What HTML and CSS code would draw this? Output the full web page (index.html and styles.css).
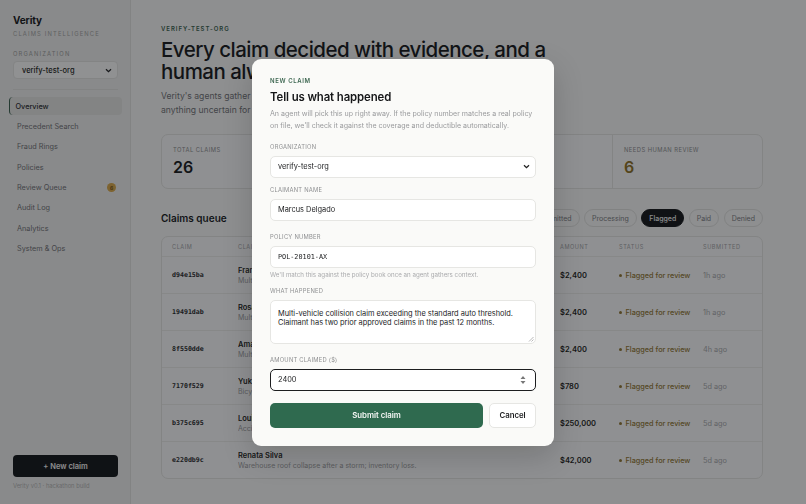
FILE: index.html
```html
<!DOCTYPE html>
<html lang="en">
<head>
<meta charset="utf-8">
<title>Verity</title>
<link rel="stylesheet" href="styles.css">
</head>
<body>
<div class="app">
  <aside class="sidebar">
    <div class="brand">Verity</div>
    <div class="brand-sub">CLAIMS INTELLIGENCE</div>
    <div class="side-label">ORGANIZATION</div>
    <div class="side-select">
      <span>verify-test-org</span>
      <svg width="7" height="5" viewBox="0 0 7 5"><path d="M1 1.2 3.5 3.7 6 1.2" fill="none" stroke="#222" stroke-width="1.3"/></svg>
    </div>
    <div class="side-divider"></div>
    <nav class="nav">
      <a class="nav-item active">Overview</a>
      <a class="nav-item">Precedent Search</a>
      <a class="nav-item">Fraud Rings</a>
      <a class="nav-item">Policies</a>
      <a class="nav-item">Review Queue <span class="badge">6</span></a>
      <a class="nav-item">Audit Log</a>
      <a class="nav-item">Analytics</a>
      <a class="nav-item">System &amp; Ops</a>
    </nav>
    <div class="side-bottom">
      <button class="new-claim">+ New claim</button>
      <div class="version">Verity v0.1 · hackathon build</div>
    </div>
  </aside>

  <main class="main">
    <div class="eyebrow">VERIFY-TEST-ORG</div>
    <h1 class="headline">Every claim decided with evidence, and a human always in the loop.</h1>
    <p class="lead">Verity's agents gather policy terms, precedent and fraud signals, then route anything uncertain for a human decision before any money moves.</p>

    <section class="stats">
      <div class="stat">
        <div class="stat-label">TOTAL CLAIMS</div>
        <div class="stat-value">26</div>
      </div>
      <div class="stat">
        <div class="stat-label">AUTO-APPROVED</div>
        <div class="stat-value">14</div>
      </div>
      <div class="stat">
        <div class="stat-label">IN PROGRESS</div>
        <div class="stat-value">6</div>
      </div>
      <div class="stat">
        <div class="stat-label">NEEDS HUMAN REVIEW</div>
        <div class="stat-value amber">6</div>
      </div>
    </section>

    <div class="queue-head">
      <h2 class="queue-title">Claims queue</h2>
      <div class="pills">
        <span class="pill">All</span>
        <span class="pill">Submitted</span>
        <span class="pill">Processing</span>
        <span class="pill on">Flagged</span>
        <span class="pill">Paid</span>
        <span class="pill">Denied</span>
      </div>
    </div>

    <section class="table">
      <div class="row head">
        <span>CLAIM</span><span>CLAIMANT</span><span>AMOUNT</span><span>STATUS</span><span>SUBMITTED</span>
      </div>
      <div class="row">
        <span class="id">d94e15ba</span>
        <span class="who"><b>Frank Okafor</b><i>Multi-vehicle collision claim exceeding the standard auto threshold.</i></span>
        <span class="amt">$2,400</span>
        <span class="status"><em></em>Flagged for review</span>
        <span class="ago">1h ago</span>
      </div>
      <div class="row">
        <span class="id">19491dab</span>
        <span class="who"><b>Rosa Martinez</b><i>Multi-vehicle collision claim exceeding the standard auto threshold.</i></span>
        <span class="amt">$2,400</span>
        <span class="status"><em></em>Flagged for review</span>
        <span class="ago">1h ago</span>
      </div>
      <div class="row">
        <span class="id">8f550dde</span>
        <span class="who"><b>Amara Chen</b><i>Multi-vehicle collision claim exceeding the standard auto threshold.</i></span>
        <span class="amt">$2,400</span>
        <span class="status"><em></em>Flagged for review</span>
        <span class="ago">4h ago</span>
      </div>
      <div class="row">
        <span class="id">7170f529</span>
        <span class="who"><b>Yuki Tanaka</b><i>Bicycle stolen from a locked garage.</i></span>
        <span class="amt">$780</span>
        <span class="status"><em></em>Flagged for review</span>
        <span class="ago">5d ago</span>
      </div>
      <div class="row">
        <span class="id">b375c695</span>
        <span class="who"><b>Louis Bernard</b><i>Accidental fire damage to a commercial kitchen.</i></span>
        <span class="amt">$250,000</span>
        <span class="status"><em></em>Flagged for review</span>
        <span class="ago">5d ago</span>
      </div>
      <div class="row">
        <span class="id">e220db9c</span>
        <span class="who"><b>Renata Silva</b><i>Warehouse roof collapse after a storm; inventory loss.</i></span>
        <span class="amt">$42,000</span>
        <span class="status"><em></em>Flagged for review</span>
        <span class="ago">5d ago</span>
      </div>
    </section>
  </main>
</div>

<div class="overlay">
  <div class="modal">
    <div class="m-eyebrow">NEW CLAIM</div>
    <h3 class="m-title">Tell us what happened</h3>
    <p class="m-desc">An agent will pick this up right away. If the policy number matches a real policy on file, we'll check it against the coverage and deductible automatically.</p>

    <div class="field f-org">
      <div class="f-label">ORGANIZATION</div>
      <div class="f-box select">
        <span>verify-test-org</span>
        <svg width="7" height="5" viewBox="0 0 7 5"><path d="M1 1.2 3.5 3.7 6 1.2" fill="none" stroke="#222" stroke-width="1.3"/></svg>
      </div>
    </div>
    <div class="field f-name">
      <div class="f-label">CLAIMANT NAME</div>
      <div class="f-box"><span>Marcus Delgado</span></div>
    </div>
    <div class="field">
      <div class="f-label">POLICY NUMBER</div>
      <div class="f-box mono"><span>POL-20101-AX</span></div>
      <div class="f-hint">We'll match this against the policy book once an agent gathers context.</div>
    </div>
    <div class="field f-what">
      <div class="f-label">WHAT HAPPENED</div>
      <div class="f-box area">Multi-vehicle collision claim exceeding the standard auto threshold. Claimant has two prior approved claims in the past 12 months.
        <svg class="grip" width="6" height="6" viewBox="0 0 6 6"><path d="M5.5 1 1 5.5M5.5 3.5 3.5 5.5" stroke="#9a9a9a" stroke-width=".7"/></svg>
      </div>
    </div>
    <div class="field">
      <div class="f-label">AMOUNT CLAIMED ($)</div>
      <div class="f-box focus">
        <span>2400</span>
        <svg width="6" height="10" viewBox="0 0 6 10"><path d="M3 1 5.5 4H.5z M3 9 .5 6h5z" fill="#777"/></svg>
      </div>
    </div>
    <div class="actions">
      <button class="btn-submit">Submit claim</button>
      <button class="btn-cancel">Cancel</button>
    </div>
  </div>
</div>
</body>
</html>
```

FILE: styles.css
```css
* { box-sizing: border-box; margin: 0; padding: 0; }

html, body { height: 100%; }

body {
  font-family: Inter, "Noto Sans", "Liberation Sans", sans-serif;
  background: #f8f8f6;
  color: #1b1c1e;
  overflow: hidden;
}

.app {
  display: flex;
  height: 504px;
}

/* Sidebar */
.sidebar {
  width: 131px;
  flex: none;
  background: #efefed;
  border-right: 1px solid #e2e2df;
  padding: 14px 12px 14px 13px;
  display: flex;
  flex-direction: column;
}

.brand {
  font-size: 10px;
  line-height: 13px;
  font-weight: 700;
  letter-spacing: -0.01em;
  color: #161719;
}

.brand-sub {
  margin-top: 2.5px;
  font-size: 5.8px;
  line-height: 7px;
  letter-spacing: 0.2em;
  color: #a4a4a2;
}

.side-label {
  margin-top: 13px;
  font-size: 5.8px;
  line-height: 7px;
  letter-spacing: 0.2em;
  color: #9c9c9a;
}

.side-select {
  margin-top: 4.5px;
  height: 18px;
  background: #fbfbfa;
  border: 1px solid #e3e3e0;
  border-radius: 4px;
  display: flex;
  align-items: center;
  justify-content: space-between;
  padding: 0 5px 0 8px;
  font-size: 7.5px;
  font-weight: 500;
  color: #1d1e20;
}

.side-divider {
  height: 1px;
  background: #e2e2df;
  margin: 10px 0 7px;
}

.nav {
  display: flex;
  flex-direction: column;
  gap: 2.4px;
  margin: 0 -4px;
}

.nav-item {
  height: 18px;
  display: flex;
  align-items: center;
  justify-content: space-between;
  padding: 0 6px 0 7px;
  border-radius: 4px;
  font-size: 7.3px;
  color: #6f7073;
  border-left: 1.5px solid transparent;
}

.nav-item.active {
  background: #e3e3e0;
  color: #2a2b2d;
  font-weight: 500;
  border-left-color: #3a5e4c;
  padding-left: 5.5px;
}

.badge {
  width: 9px;
  height: 9px;
  border-radius: 50%;
  background: #d9a847;
  color: #7a5412;
  font-size: 5px;
  font-weight: 700;
  display: flex;
  align-items: center;
  justify-content: center;
}

.side-bottom {
  margin-top: auto;
}

.new-claim {
  width: 100%;
  height: 22px;
  border: none;
  border-radius: 4px;
  background: #121417;
  color: #f3f3f1;
  font-family: inherit;
  font-size: 7.5px;
  font-weight: 600;
}

.version {
  margin-top: 5px;
  font-size: 5.8px;
  line-height: 8px;
  color: #b4b4b2;
}

/* Main */
.main {
  flex: 1;
  padding: 25px 43px 0 30px;
  min-width: 0;
}

.eyebrow {
  font-size: 6px;
  line-height: 8px;
  letter-spacing: 0.16em;
  font-weight: 600;
  color: #38604c;
}

.headline {
  margin-top: 6px;
  max-width: 385px;
  font-size: 20.5px;
  line-height: 22px;
  font-weight: 500;
  letter-spacing: -0.025em;
  color: #17181a;
}

.lead {
  margin-top: 6px;
  max-width: 340px;
  font-size: 8.6px;
  line-height: 14px;
  color: #707174;
}

.stats {
  margin-top: 17px;
  height: 55px;
  display: grid;
  grid-template-columns: repeat(4, 1fr);
  border: 1px solid #e3e3e0;
  border-radius: 7px;
  background: #fafaf9;
}

.stat {
  padding: 11px 11px 0;
  border-left: 1px solid #e3e3e0;
}

.stat:first-child { border-left: none; }

.stat-label {
  font-size: 5.8px;
  line-height: 8px;
  letter-spacing: 0.08em;
  color: #8c8d8f;
}

.stat-value {
  margin-top: 4px;
  font-size: 16px;
  line-height: 19px;
  font-weight: 600;
  color: #17181a;
}

.stat-value.amber { color: #8c6f22; }

.queue-head {
  margin-top: 20px;
  display: flex;
  align-items: center;
  justify-content: space-between;
}

.queue-title {
  font-size: 10px;
  font-weight: 600;
  color: #17181a;
}

.pills {
  display: flex;
  gap: 4.5px;
}

.pill {
  height: 18px;
  padding: 0 7px;
  border: 1px solid #e0e0dd;
  border-radius: 9px;
  font-size: 7px;
  color: #7a7b7e;
  display: flex;
  align-items: center;
  background: #f8f8f6;
}

.pill.on {
  background: #131517;
  border-color: #131517;
  color: #f2f2f0;
  font-weight: 500;
}

.table {
  margin-top: 9px;
  border: 1px solid #e3e3e0;
  border-radius: 7px;
  background: #fafaf9;
}

.row {
  display: grid;
  grid-template-columns: 66px 322px 59px 84px 1fr;
  align-items: center;
  padding: 0 10px;
  height: 37px;
  border-top: 1px solid #ebebe8;
  font-size: 7.3px;
}

.row.head {
  height: 19px;
  border-top: none;
  font-size: 5.6px;
  letter-spacing: 0.1em;
  color: #a2a3a5;
}

.id {
  font-family: "DejaVu Sans Mono", "Liberation Mono", monospace;
  font-weight: 700;
  font-size: 6.6px;
  color: #27282a;
}

.who {
  display: flex;
  flex-direction: column;
  gap: 1px;
  overflow: hidden;
  white-space: nowrap;
}

.who b {
  font-weight: 600;
  color: #1d1e20;
  font-size: 7.5px;
  line-height: 9px;
}

.who i {
  font-style: normal;
  color: #9a9b9d;
  font-size: 7px;
  line-height: 9px;
}

.amt {
  font-weight: 600;
  color: #1d1e20;
  font-size: 7.5px;
}

.status {
  display: flex;
  align-items: center;
  gap: 3.5px;
  color: #917631;
  font-weight: 500;
}

.status em {
  width: 3px;
  height: 3px;
  border-radius: 50%;
  background: #917631;
}

.ago { color: #a6a7a9; }

/* Modal */
.overlay {
  position: fixed;
  inset: 0;
  background: rgba(14, 16, 20, 0.45);
  display: flex;
  align-items: center;
  justify-content: center;
}

.modal {
  width: 302px;
  background: #fafaf8;
  border-radius: 9px;
  padding: 18px 18px 18px;
  box-shadow: 0 10px 30px rgba(0, 0, 0, 0.18);
}

.m-eyebrow {
  font-size: 6px;
  line-height: 8px;
  letter-spacing: 0.1em;
  font-weight: 600;
  color: #3c6650;
}

.m-title {
  margin-top: 4px;
  font-size: 11.4px;
  line-height: 16px;
  font-weight: 600;
  letter-spacing: -0.01em;
  color: #151618;
}

.m-desc {
  margin-top: 3px;
  font-size: 7.05px;
  line-height: 12px;
  color: #9a9b9d;
}

.field { margin-top: 12px; }
.field.f-org { margin-top: 11px; }
.field.f-name { margin-top: 8px; }
.field.f-what { margin-top: 8px; }

.f-label {
  font-size: 5.8px;
  line-height: 8px;
  letter-spacing: 0.04em;
  color: #8e8f91;
  margin-bottom: 5px;
}

.f-box {
  height: 22px;
  background: #ffffff;
  border: 1px solid #e6e6e3;
  border-radius: 5px;
  padding: 0 7px;
  display: flex;
  align-items: center;
  justify-content: space-between;
  font-size: 7.4px;
  color: #1b1c1e;
}

.f-box.select { padding-right: 5px; }

.f-box.mono span {
  font-family: "DejaVu Sans Mono", "Liberation Mono", monospace;
  font-size: 6.8px;
}

.f-hint {
  margin-top: 3px;
  font-size: 6.2px;
  line-height: 8px;
  color: #a9aaac;
}

.f-box.area {
  position: relative;
  height: 44px;
  display: block;
  padding: 8px 7px 0;
  font-size: 7.4px;
  line-height: 9.6px;
}

.grip {
  position: absolute;
  right: 1px;
  bottom: 1px;
}

.f-box.focus {
  border: 1.5px solid #1c1d1f;
  padding-right: 9px;
}

.actions {
  margin-top: 12px;
  display: flex;
  gap: 6px;
}

.btn-submit {
  flex: 1;
  height: 25px;
  border: none;
  border-radius: 5px;
  background: #2f6a4f;
  color: #f5f7f5;
  font-family: inherit;
  font-size: 7.8px;
  font-weight: 600;
}

.btn-cancel {
  width: 47px;
  height: 25px;
  border: 1px solid #e6e6e3;
  border-radius: 5px;
  background: #ffffff;
  color: #1b1c1e;
  font-family: inherit;
  font-size: 7.8px;
  font-weight: 600;
}
```
